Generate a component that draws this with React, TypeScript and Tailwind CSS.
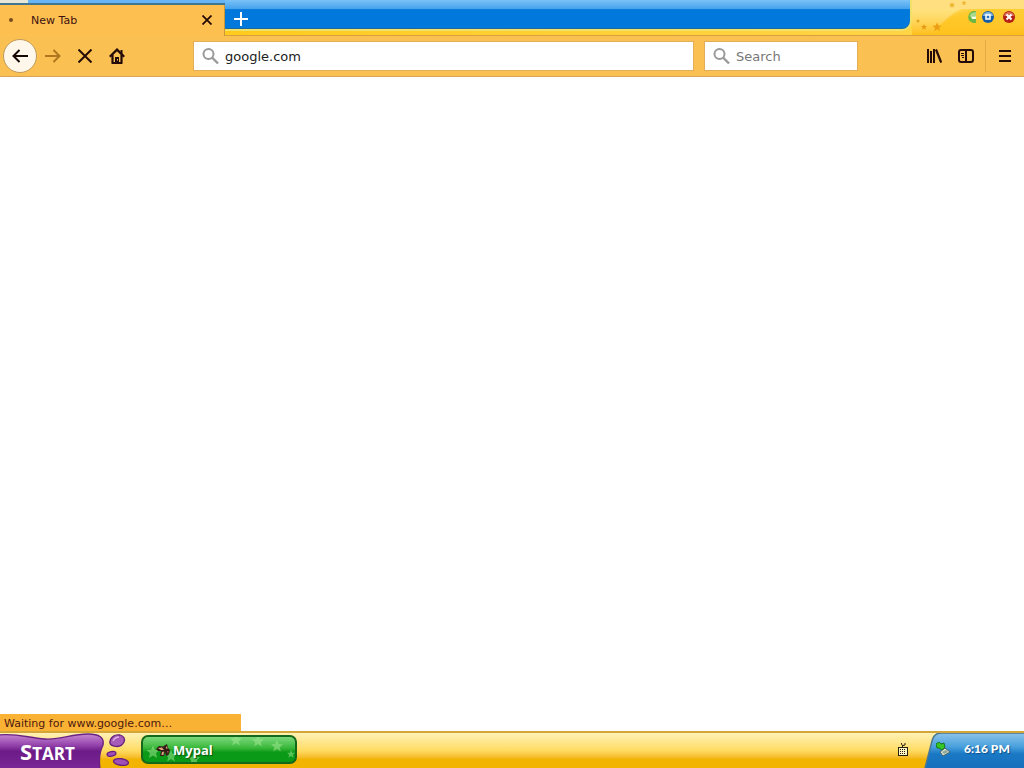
import React from "react";

const toolButton = "flex h-8 w-8 items-center justify-center text-[#250b08]";

function Magnifier() {
  return (
    <svg width="18" height="18" viewBox="0 0 18 18" fill="none" stroke="#999999" aria-hidden="true">
      <circle cx="6.500" cy="7" r="5" strokeWidth="2" />
      <path d="M10 10.500L16 16.500" strokeWidth="2.4" />
    </svg>
  );
}

function Star({ x, y, s, fill, opacity = 1 }: { x: number; y: number; s: number; fill: string; opacity?: number }) {
  return (
    <path
      transform={`translate(${x} ${y}) scale(${s})`}
      d="M0-5L1.5-1.6L5-1.5L2.3 1L3.2 4.6L0 2.6L-3.2 4.6L-2.3 1L-5-1.5L-1.5-1.6Z"
      fill={fill}
      opacity={opacity}
    />
  );
}

function WindowControls() {
  return (
    <div className="relative h-full w-[112px] shrink-0 bg-linear-to-b from-[#ffdf80] from-25% via-[#ffd348] via-26% to-[#ffbd18]">
      <svg className="absolute inset-0" width="112" height="35" viewBox="2 0 112 35" aria-hidden="true">
        <defs>
          <linearGradient id="sheen" x1="0" y1="0" x2="1" y2="1">
            <stop offset="0" stopColor="#ffc61c" stopOpacity="0" />
            <stop offset="0.35" stopColor="#ffc61c" />
            <stop offset="1" stopColor="#ffc61c" stopOpacity="0" />
          </linearGradient>
          <linearGradient id="glow" x1="0" y1="0" x2="0" y2="1">
            <stop offset="0" stopColor="#ffe68c" stopOpacity="0.8" />
            <stop offset="1" stopColor="#ffe68c" stopOpacity="0" />
          </linearGradient>
        </defs>
        <path d="M0 9H52Q34 16 26 35H0Z" fill="url(#glow)" />
        <path d="M22 35Q38 9 75 9H114V35Z" fill="url(#sheen)" opacity="0.6" />
        <Star x={42} y={5} s={0.6} fill="#efb22c" />
        <Star x={54} y={3} s={0.5} fill="#efb22c" />
        <Star x={8} y={21} s={0.4} fill="#e0a01c" />
        <Star x={14} y={27} s={0.6} fill="#e59c14" />
        <Star x={27} y={27} s={0.9} fill="#ec9f14" />
      </svg>
      <div className="relative flex h-[34px] items-center justify-end gap-2 pr-[9px]">
        <div className="flex gap-[2px]">
          <button aria-label="Minimize" className="h-3 w-3">
            <svg width="12" height="12" viewBox="0 0 12 12">
              <path d="M8 0.300A6 6 0 1 0 8 11.700Z" fill="#6bb545" />
              <path d="M8 1.300Q3 0.500 1.300 5.500H8Z" fill="#a6d98b" />
              <path d="M3 5.500H8V8H4Z" fill="#f5ffe8" />
            </svg>
          </button>
          <button aria-label="Maximize" className="h-3 w-3">
            <svg width="12" height="12" viewBox="0 0 12 12">
              <circle cx="6" cy="6" r="6" fill="#175da6" />
              <path d="M1 5A5 4 0 0 1 11 5Z" fill="#83b9e4" />
              <rect x="4" y="4" width="4" height="4" fill="#2a75bd" stroke="#fff" strokeWidth="1.5" />
            </svg>
          </button>
        </div>
        <button aria-label="Close window" className="ml-px h-3 w-3">
          <svg width="12" height="12" viewBox="0 0 12 12">
            <circle cx="6" cy="6" r="6" fill="#b51f16" />
            <path d="M1 5A5 4 0 0 1 11 5Z" fill="#db6c58" />
            <path d="M3.5 3.5L8.5 8.5M8.5 3.5L3.5 8.5" stroke="#fff" strokeWidth="2" />
          </svg>
        </button>
      </div>
    </div>
  );
}

function TabStrip() {
  return (
    <header className="flex h-9 bg-[#ffcb1c]">
      <div className="flex w-[225px] shrink-0 flex-col">
        <div className="flex h-[3px]">
          <div className="w-7 bg-[#e5e8d9]" />
          <div className="flex-1 bg-[#67b5f5]" />
        </div>
        <div className="h-[2px] bg-[#42758e]" />
        <div className="flex flex-1 items-center border-r border-[#c99638] bg-[#fdbf50] pr-[7px] pb-px pl-[9px]">
          <span className="h-1 w-1 rounded-full bg-[#7a4a1c]" />
          <span className="ml-[18px] flex-1 pt-px text-[11px] leading-4 text-[#3d1010]">New Tab</span>
          <button aria-label="Close tab" className="flex h-5 w-5 items-center justify-center">
            <svg width="10" height="10" viewBox="0 0 10 10" stroke="#250b08" strokeWidth="1.8">
              <path d="M0.5 0.5L9.5 9.5M9.5 0.5L0.5 9.5" />
            </svg>
          </button>
        </div>
      </div>
      <div className="flex min-w-0 flex-1 border-b border-[#d9a040]">
        <div className="min-w-0 flex-1 bg-linear-to-r from-[#ffcb1c] to-[#ffd445]">
          <div className="h-[31px] rounded-br-[10px] border-r-2 border-b-2 border-[#f1e06a] bg-linear-to-b from-[#7ac2f8] from-0% via-[#45a3ec] via-30% to-[#0078dc] to-33% pt-[11px] pl-2 shadow-[inset_0_-1px_0_#1d6a9c]">
            <button aria-label="New tab" className="flex h-4 w-4 items-center justify-center">
              <svg width="14" height="14" viewBox="0 0 14 14" stroke="#fff" strokeWidth="2">
                <path d="M7 0V14M0 7H14" />
              </svg>
            </button>
          </div>
        </div>
        <WindowControls />
      </div>
    </header>
  );
}

function Toolbar() {
  return (
    <nav className="flex h-[41px] items-center border-b border-[#d9a458] bg-[#fbc052]" aria-label="Navigation">
      <div className="flex w-[193px] shrink-0 items-center pl-[3px]">
        <button aria-label="Back" className="flex h-[34px] w-[34px] items-center justify-center rounded-full border border-[#c19a58] bg-[#fff8ea]">
          <svg width="16" height="14" viewBox="0 0 16 14" fill="none" stroke="#150604" strokeWidth="2">
            <path d="M16 7H1.5M7.5 1L1.5 7L7.5 13" />
          </svg>
        </button>
        <button aria-label="Forward" className={toolButton}>
          <svg width="16" height="14" viewBox="0 0 16 14" fill="none" stroke="#b0771e" strokeWidth="2">
            <path d="M0 7H14.5M8.5 1L14.5 7L8.5 13" />
          </svg>
        </button>
        <button aria-label="Stop" className={toolButton}>
          <svg width="14" height="14" viewBox="0 0 14 14" stroke="currentColor" strokeWidth="2">
            <path d="M0.5 0.5L13.5 13.5M13.5 0.5L0.5 13.5" />
          </svg>
        </button>
        <button aria-label="Home" className={toolButton}>
          <svg width="16" height="16" viewBox="0 0 16 16" fill="none" stroke="currentColor" strokeWidth="2">
            <path d="M0.8 8.8L8 1.6L15.2 8.8" strokeWidth="2.300" />
            <path d="M3.500 7V15H12.500V7" strokeWidth="2.200" strokeLinejoin="round" />
            <path d="M6 15V9H10V15Z" fill="currentColor" strokeWidth="0" />
            <path d="M12.5 2V6" />
            <path d="M8.500 11V12.500" stroke="#fbc052" strokeWidth="1" />
          </svg>
        </button>
      </div>
      <label className="flex h-[30px] min-w-0 flex-1 items-center border border-[#e3ae59] bg-white pl-2">
        <Magnifier />
        <input aria-label="Address" defaultValue="google.com" className="ml-[5px] min-w-0 flex-1 bg-transparent pt-[2px] text-[13px] text-[#222] outline-none" />
      </label>
      <label className="ml-[10px] flex h-[30px] w-[154px] items-center border border-[#e3ae59] bg-white pl-2">
        <Magnifier />
        <input aria-label="Search" placeholder="Search" className="ml-[5px] min-w-0 flex-1 bg-transparent pt-[2px] text-[13px] outline-none placeholder:text-[#777]" />
      </label>
      <div className="ml-[60px] flex w-[106px] shrink-0 items-center">
        <button aria-label="Library" className={toolButton}>
          <svg width="16" height="16" viewBox="0 0 16 16" stroke="currentColor" strokeWidth="2">
            <path d="M2 1V15M5 3V15M8 1V15" />
            <path d="M10 1.500L15.200 14.500" strokeWidth="2.200" />
          </svg>
        </button>
        <button aria-label="Sidebar" className={toolButton}>
          <svg width="16" height="14" viewBox="0 0 16 14" fill="none" stroke="currentColor">
            <rect x="1" y="1" width="14" height="12" rx="2" strokeWidth="2" />
            <path d="M8 1V13" strokeWidth="2" />
            <path d="M3 4.5H6M3 6.5H6M4 8.5H6" />
          </svg>
        </button>
        <div className="mx-[3px] h-8 border-l border-[#e2aa47]" />
        <button aria-label="Menu" className={toolButton}>
          <svg width="12" height="12" viewBox="0 0 12 12" stroke="currentColor" strokeWidth="2">
            <path d="M0 1H12M0 6H12M0 11H12" />
          </svg>
        </button>
      </div>
    </nav>
  );
}

function Taskbar() {
  return (
    <footer className="flex h-[37px] items-stretch border-t-2 border-[#d3a63a] bg-linear-to-b from-[#fff2b4] from-0% via-[#ffdb60] via-50% to-[#f2b400] to-75%">
      <button className="relative flex h-[35px] w-[132px] shrink-0 items-center pl-5">
        <svg className="absolute inset-0" width="132" height="35" viewBox="0 0 132 35" aria-hidden="true">
          <defs>
            <linearGradient id="splash" x1="0" y1="0" x2="0" y2="1">
              <stop offset="0" stopColor="#c58ad2" />
              <stop offset="0.28" stopColor="#9b4bb1" />
              <stop offset="0.5" stopColor="#6c1b87" />
              <stop offset="1" stopColor="#7c2798" />
            </linearGradient>
          </defs>
          <path d="M-2 2C18 0 28 5 45 6S70 1 88 1Q105 1 103 12Q98 22 100 36H-2Z" fill="url(#splash)" stroke="#6a2384" strokeWidth="1.4" />
          <path d="M110 8Q112 1 120 2Q126 4 124 9Q121 15 114 13Q109 12 110 8Z" fill="#a75bb9" stroke="#66207e" strokeWidth="1.3" />
          <path d="M113 8Q115 4 119 4" fill="none" stroke="#dcb0e4" strokeWidth="1.3" />
          <ellipse cx="111.500" cy="21" rx="4.500" ry="2.300" transform="rotate(-12 111 21)" fill="#a04fb5" stroke="#66207e" strokeWidth="1.300" />
          <ellipse cx="121" cy="29" rx="7.500" ry="3.300" transform="rotate(8 121 29)" fill="#a04fb5" stroke="#66207e" strokeWidth="1.300" />
        </svg>
        <span className="relative inline-block pt-[3px] font-['Open_Sans',sans-serif] text-[17px] leading-6 font-bold text-white uppercase first-letter:text-[22px]">Start</span>
      </button>
      <button className="relative mt-[2px] ml-[9px] flex h-[29px] w-[156px] items-center rounded-[7px] border-2 border-[#14681a] bg-linear-to-b from-[#79d979] from-0% via-[#35b637] via-45% to-[#0b9a18] to-60% pl-3">
        <svg className="absolute inset-0" width="152" height="25" viewBox="0 0 152 25" aria-hidden="true">
          <Star x={10} y={15} s={1.3} fill="#a5e995" opacity={0.5} />
          <Star x={28} y={19} s={1.2} fill="#a5e995" opacity={0.5} />
          <Star x={51} y={22} s={1.2} fill="#a5e995" opacity={0.5} />
          <Star x={93} y={3} s={1.2} fill="#a5e995" opacity={0.5} />
          <Star x={115} y={4} s={1.2} fill="#a5e995" opacity={0.5} />
          <Star x={134} y={9} s={1.2} fill="#a5e995" opacity={0.5} />
          <Star x={148} y={17} s={0.8} fill="#a5e995" opacity={0.5} />
        </svg>
        <svg className="relative" width="16" height="14" viewBox="0 0 16 14" aria-hidden="true">
          <path d="M1 6L4 3L8 3.500L12 1L13 5L15 7L13.500 12L11 13L10 8.500L9 13H5L6 8L3 8Z" fill="#321b16" />
          <path d="M3 5L7 4.500L9 7L6 7ZM7 9L9 8.500L8.500 12L6.500 12ZM10.500 5L12 3L12.500 6Z" fill="#e0a882" />
          <path d="M12 8L13.500 8L13 11Z" fill="#b05a48" />
        </svg>
        <span className="relative ml-[2px] pt-[2px] font-['Open_Sans',sans-serif] text-[13px] font-bold text-white text-shadow-[1px_1px_1px_#0b5412]">Mypal</span>
      </button>
      <div className="ml-auto flex w-[136px] shrink-0 items-stretch">
        <svg className="mt-[10px] ml-[10px]" width="10" height="14" viewBox="0 0 10 14" fill="none" stroke="#24220f" aria-hidden="true">
          <path d="M4.500 4V2L3.500 1.500V0M7 0V2L5 2.500" />
          <rect x="0.500" y="4.500" width="9" height="8" fill="#fff3c4" />
          <path d="M2 6.500H8M2 8.500H8M2 10.500H8" strokeDasharray="1 1" />
        </svg>
        <div className="relative ml-auto flex w-[101px] items-center pb-[3px]">
          <svg className="absolute inset-0" width="101" height="35" viewBox="0 0 101 35" aria-hidden="true">
            <defs>
              <linearGradient id="tray" x1="0" y1="0" x2="0" y2="1">
                <stop offset="0" stopColor="#8dc4ea" />
                <stop offset="0.4" stopColor="#479fdc" />
                <stop offset="0.6" stopColor="#1978c4" />
                <stop offset="1" stopColor="#1870bc" />
              </linearGradient>
            </defs>
            <path d="M2 35L9 8Q11 0 18 0H101V35Z" fill="url(#tray)" />
            <path d="M2 35L9 8Q11 0 18 0H101" fill="none" stroke="#4c7790" strokeWidth="1.5" />
          </svg>
          <svg className="relative ml-[13px]" width="15" height="15" viewBox="0 0 15 15" aria-hidden="true">
            <path d="M4 10L9 6L14 10L7 14Z" fill="#d7e0d4" stroke="#4b6568" />
            <path d="M6 10L10 8L12 10L8 12Z" fill="#8baa99" />
            <path d="M0 2L3 0L5 2L8 1L9 5L6 8L3 6L1 6Z" fill="#36c625" stroke="#167720" />
          </svg>
          <time className="relative ml-[13px] font-['Lato',sans-serif] text-[12px] font-black text-white text-shadow-[1px_1px_1px_#0f4f8c]">6:16 PM</time>
        </div>
      </div>
    </footer>
  );
}

export default function App() {
  return (
    <div className="flex min-h-screen flex-col bg-white font-['DejaVu_Sans',sans-serif]">
      <TabStrip />
      <Toolbar />
      <main className="flex flex-1 flex-col justify-end">
        <div role="status" className="h-[17px] w-[241px] bg-[#f9b233] pl-1 text-[11px] leading-5 text-[#4e1812]">Waiting for www.google.com…</div>
      </main>
      <Taskbar />
    </div>
  );
}
